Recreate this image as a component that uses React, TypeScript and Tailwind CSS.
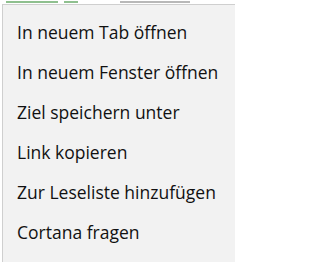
import React from 'react';

const items = [
  'In neuem Tab öffnen',
  'In neuem Fenster öffnen',
  'Ziel speichern unter',
  'Link kopieren',
  'Zur Leseliste hinzufügen',
  'Cortana fragen',
];

export default function App() {
  return (
    <div className="w-[235px] h-[262px] bg-white overflow-hidden flex flex-col">
      {/* page content peeking out above the menu */}
      <div className="h-[4px] flex items-end gap-[2px] pl-[6px] pb-[1px]">
        <div className="h-[2px] w-[52px] bg-[#8fc08f]" />
        <div className="h-[2px] w-[14px] bg-[#8fc08f] ml-[4px]" />
        <div className="h-[2px] w-[70px] bg-[#b8b8b8] ml-[40px]" />
      </div>
      <div className="flex flex-1 pl-[2px]">
        <div className="flex-1 bg-[#f2f2f2] border-l border-t border-[#cfcfcf] pt-[7px] font-['Open_Sans',sans-serif] text-[17.5px] text-[#111]">
          {items.map(label => (
            <div key={label} className="h-[40px] flex items-center pl-[14px] whitespace-nowrap">
              {label}
            </div>
          ))}
        </div>
      </div>
    </div>
  );
}
